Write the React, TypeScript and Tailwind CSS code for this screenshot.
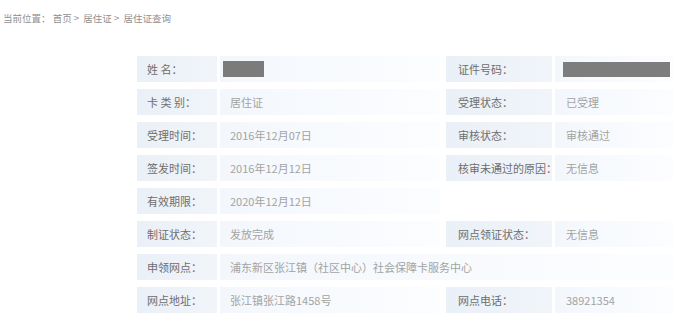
import React from 'react';

interface Field {
  label: string;
  value?: string;
  masked?: 'name' | 'id';
}

interface Row {
  left: Field;
  right?: Field;
  wide?: boolean;
}

const rows: Row[] = [
  { left: { label: '姓 名：', masked: 'name' }, right: { label: '证件号码：', masked: 'id' } },
  { left: { label: '卡 类 别：', value: '居住证' }, right: { label: '受理状态：', value: '已受理' } },
  { left: { label: '受理时间：', value: '2016年12月07日' }, right: { label: '审核状态：', value: '审核通过' } },
  { left: { label: '签发时间：', value: '2016年12月12日' }, right: { label: '核审未通过的原因：', value: '无信息' } },
  { left: { label: '有效期限：', value: '2020年12月12日' } },
  { left: { label: '制证状态：', value: '发放完成' }, right: { label: '网点领证状态：', value: '无信息' } },
  { left: { label: '申领网点：', value: '浦东新区张江镇（社区中心）社会保障卡服务中心' }, wide: true },
  { left: { label: '网点地址：', value: '张江镇张江路1458号' }, right: { label: '网点电话：', value: '38921354' } },
];

const font = { fontFamily: '"Noto Sans CJK SC", "Noto Sans", sans-serif' };

const Value: React.FC<{ field: Field; className: string }> = ({ field, className }) => (
  <div className={`flex items-center h-full bg-gradient-to-r from-[#f3f7fc] to-[#fcfdff] text-[#a3a3a3] whitespace-nowrap ${className}`}>
    {field.masked === 'name' && <span className="block -ml-[7px] w-[41px] h-[16px] bg-[#7b7b7b]" />}
    {field.masked === 'id' && <span className="block -ml-[3px] w-[107px] h-[15px] bg-[#7d7d7d]" />}
    {field.value}
  </div>
);

const App: React.FC = () => {
  return (
    <div className="w-[686px] h-[332px] bg-white overflow-hidden text-[11px]" style={font}>
      <div className="pt-[11px] pl-[3px] text-[#8f8f8f] text-[9.5px] leading-[14px]">
        当前位置：&nbsp;首页 &gt;&nbsp; 居住证 &gt;&nbsp; 居住证查询
      </div>

      <div className="mt-[31px] ml-[137px] w-[536px] flex flex-col gap-[7px]">
        {rows.map((row, i) => (
          <div key={i} className="flex h-[26px]">
            <div className="w-[80px] h-full flex items-center pl-[10px] bg-gradient-to-r from-[#eaf0f7] to-[#f1f5fa] text-[#6e6e6e] whitespace-nowrap">
              {row.left.label}
            </div>
            {row.wide ? (
              <Value field={row.left} className="ml-[3px] flex-1 pl-[10px]" />
            ) : (
              <>
                <Value field={row.left} className="ml-[3px] w-[220px] pl-[10px]" />
                {row.right ? (
                  <>
                    <div className="ml-[6px] w-[106px] h-full flex items-center pl-[12px] bg-gradient-to-r from-[#eaf0f7] to-[#f1f5fa] text-[#6e6e6e] whitespace-nowrap">
                      {row.right.label}
                    </div>
                    <Value field={row.right} className="ml-[3px] flex-1 pl-[11px]" />
                  </>
                ) : null}
              </>
            )}
          </div>
        ))}
      </div>
    </div>
  );
};

export default App;
